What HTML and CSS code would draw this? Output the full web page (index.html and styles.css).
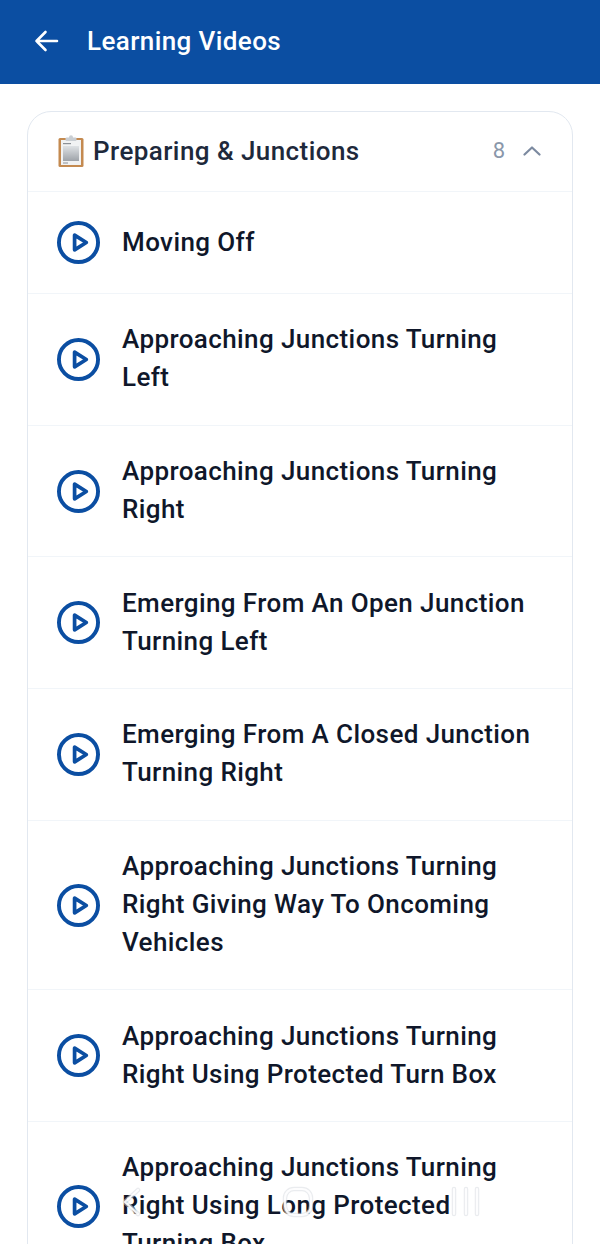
FILE: index.html
```html
<!DOCTYPE html>
<html lang="en">
<head>
<meta charset="utf-8">
<title>Learning Videos</title>
<link rel="stylesheet" href="styles.css">
</head>
<body>
<header class="topbar">
  <svg class="back" width="26" height="24" viewBox="0 0 26 24" fill="none" stroke="#fff" stroke-width="2.6" stroke-linecap="round" stroke-linejoin="round"><path d="M23 12H2.500M11.500 3 2.500 12l9 9"/></svg>
  <h1 class="title">Learning Videos</h1>
</header>
<main class="content">
  <section class="card">
    <div class="card-head">
      <svg class="clip" width="26" height="32" viewBox="0 0 26 32">
        <defs><linearGradient id="sheet" x1="0" y1="0" x2="0" y2="1"><stop offset="0" stop-color="#dfe2e5"/><stop offset="1" stop-color="#9ea3a9"/></linearGradient></defs>
        <rect x="0.500" y="3" width="25" height="29" rx="1.500" fill="#c48a50"/>
        <rect x="3" y="5" width="20" height="25" fill="#f1f2f3"/>
        <rect x="5" y="11" width="16" height="15" fill="url(#sheet)"/>
        <rect x="5" y="8" width="8" height="1.200" fill="#8b9096"/>
        <rect x="5" y="27.500" width="5" height="1" fill="#8b9096"/>
        <rect x="7.500" y="2.500" width="11" height="3.500" rx="1" fill="#c9ced3"/>
        <circle cx="13" cy="2.200" r="2" fill="#c9ced3"/>
      </svg>
      <h2 class="card-title">Preparing &amp; Junctions</h2>
      <span class="count">8</span>
      <svg class="chev" width="18" height="10" viewBox="0 0 18 10" fill="none" stroke="#7c8aa0" stroke-width="2.200" stroke-linecap="round" stroke-linejoin="round"><path d="M1.500 8.500 9 1.500l7.500 7"/></svg>
    </div>
    <ul class="list">
      <li class="row"><svg class="play" width="43" height="43" viewBox="0 0 44 44" fill="none" stroke="#0b4ea2" stroke-linejoin="round"><circle cx="22" cy="22" r="20" stroke-width="4"/><path d="M18 14.500v15L30 22z" stroke-width="3.800"/></svg><span class="label">Moving Off</span></li>
      <li class="row"><svg class="play" width="43" height="43" viewBox="0 0 44 44" fill="none" stroke="#0b4ea2" stroke-linejoin="round"><circle cx="22" cy="22" r="20" stroke-width="4"/><path d="M18 14.500v15L30 22z" stroke-width="3.800"/></svg><span class="label">Approaching Junctions Turning Left</span></li>
      <li class="row"><svg class="play" width="43" height="43" viewBox="0 0 44 44" fill="none" stroke="#0b4ea2" stroke-linejoin="round"><circle cx="22" cy="22" r="20" stroke-width="4"/><path d="M18 14.500v15L30 22z" stroke-width="3.800"/></svg><span class="label">Approaching Junctions Turning Right</span></li>
      <li class="row"><svg class="play" width="43" height="43" viewBox="0 0 44 44" fill="none" stroke="#0b4ea2" stroke-linejoin="round"><circle cx="22" cy="22" r="20" stroke-width="4"/><path d="M18 14.500v15L30 22z" stroke-width="3.800"/></svg><span class="label">Emerging From An Open Junction Turning Left</span></li>
      <li class="row"><svg class="play" width="43" height="43" viewBox="0 0 44 44" fill="none" stroke="#0b4ea2" stroke-linejoin="round"><circle cx="22" cy="22" r="20" stroke-width="4"/><path d="M18 14.500v15L30 22z" stroke-width="3.800"/></svg><span class="label">Emerging From A Closed Junction Turning Right</span></li>
      <li class="row"><svg class="play" width="43" height="43" viewBox="0 0 44 44" fill="none" stroke="#0b4ea2" stroke-linejoin="round"><circle cx="22" cy="22" r="20" stroke-width="4"/><path d="M18 14.500v15L30 22z" stroke-width="3.800"/></svg><span class="label">Approaching Junctions Turning Right Giving Way To Oncoming Vehicles</span></li>
      <li class="row"><svg class="play" width="43" height="43" viewBox="0 0 44 44" fill="none" stroke="#0b4ea2" stroke-linejoin="round"><circle cx="22" cy="22" r="20" stroke-width="4"/><path d="M18 14.500v15L30 22z" stroke-width="3.800"/></svg><span class="label">Approaching Junctions Turning Right Using Protected Turn Box</span></li>
      <li class="row"><svg class="play" width="43" height="43" viewBox="0 0 44 44" fill="none" stroke="#0b4ea2" stroke-linejoin="round"><circle cx="22" cy="22" r="20" stroke-width="4"/><path d="M18 14.500v15L30 22z" stroke-width="3.800"/></svg><span class="label">Approaching Junctions Turning Right Using Long Protected Turning Box</span></li>
    </ul>
  </section>
</main>
<svg class="sysnav" width="360" height="34" viewBox="0 0 360 34" fill="none" stroke-linecap="round" stroke-linejoin="round">
  <g stroke="#d9dce1" stroke-opacity="0.55" stroke-width="4.500">
    <path d="M16 4 3 16l13 12"/>
    <rect x="163" y="3" width="26" height="26" rx="9"/>
    <path d="M332 3v25M344 3v25M355 3v25"/>
  </g>
  <g stroke="#fff" stroke-opacity="0.9" stroke-width="2.200">
    <path d="M16 4 3 16l13 12"/>
    <rect x="163" y="3" width="26" height="26" rx="9"/>
    <path d="M332 3v25M344 3v25M355 3v25"/>
  </g>
</svg>
</body>
</html>
```
FILE: styles.css
```css
* { box-sizing: border-box; }
html, body { margin: 0; padding: 0; }
body {
  position: relative;
  width: 600px;
  height: 1244px;
  overflow: hidden;
  background: #fff;
  font-family: Roboto, "Liberation Sans", sans-serif;
}
.topbar {
  display: flex;
  align-items: center;
  height: 84px;
  padding: 0 0 2px 34px;
  gap: 27px;
  background: #0b4ea2;
}
.title {
  margin: 0;
  font-size: 26px;
  font-weight: 500;
  letter-spacing: 0.4px;
  color: #fff;
}
.content { padding: 27px 27px 0; }
.card {
  border: 1.500px solid #e2e8f0;
  border-radius: 24px;
  background: #fff;
}
.card-head {
  display: flex;
  align-items: center;
  height: 80px;
  padding: 0 31px 2px 30px;
  border-bottom: 1px solid #f1f5f9;
}
.clip { flex: none; margin-right: 9px; }
.card-title {
  flex: 1;
  margin: 0;
  font-size: 26px;
  font-weight: 500;
  letter-spacing: 0.43px;
  color: #1e293b;
}
.count {
  margin-right: 18px;
  font-size: 22px;
  color: #8a97aa;
}
.list { margin: 0; padding: 0; list-style: none; }
.row {
  display: flex;
  align-items: center;
  gap: 22px;
  min-height: 102px;
  padding: 27.350px 40px 27.350px 29px;
  border-bottom: 1px solid #f1f5f9;
}
.play { flex: none; }
.label {
  margin: -1px 0 1px;
  font-size: 26px;
  font-weight: 500;
  line-height: 38px;
  letter-spacing: 0.4px;
  color: #0f172a;
}
.sysnav {
  position: absolute;
  left: 122px;
  top: 1186px;
}
```
